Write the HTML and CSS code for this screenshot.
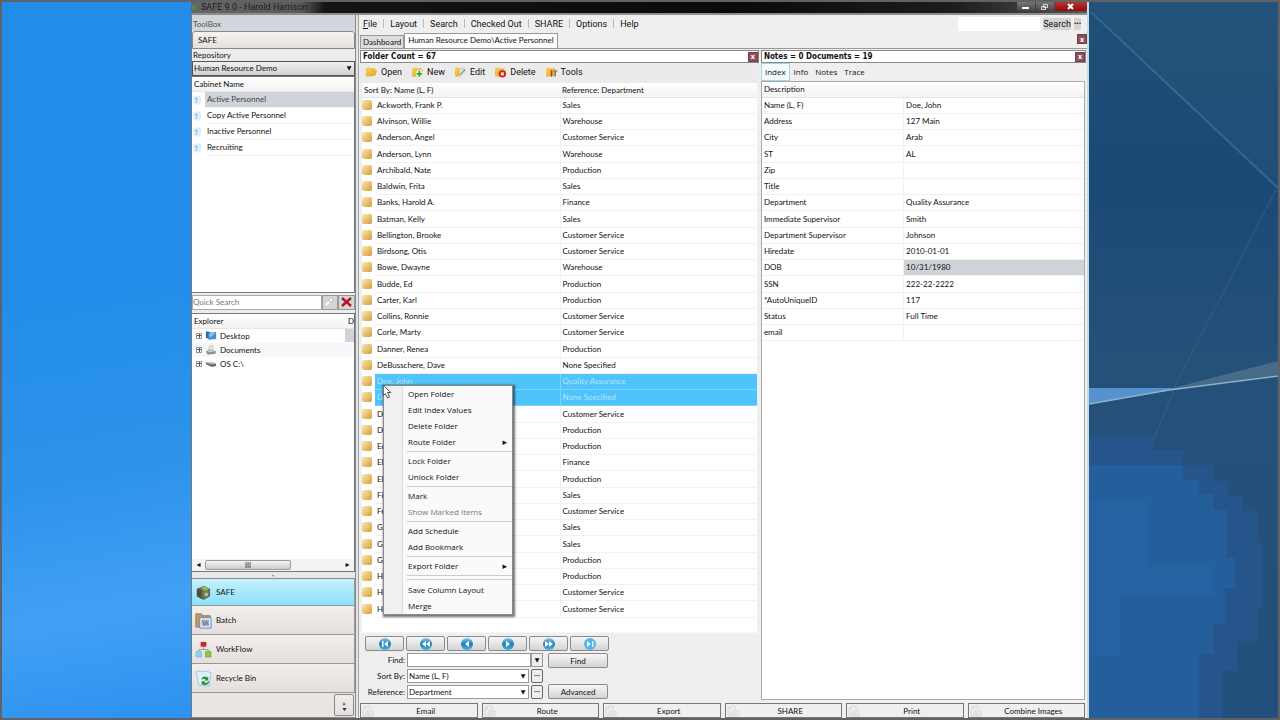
FILE: index.html
```html
<!DOCTYPE html>
<html lang="en">
<head>
<meta charset="utf-8">
<title>SAFE 9.0 - Harold Harrison</title>
<link rel="stylesheet" href="styles.css">
</head>
<body>
<svg class="defs" aria-hidden="true">
  <defs>
    <linearGradient id="orb" x1="0" y1="0" x2="0" y2="1"><stop offset="0" stop-color="#8fc4e4"/><stop offset=".5" stop-color="#1d7fb8"/><stop offset="1" stop-color="#45b4e6"/></linearGradient>
    <linearGradient id="gold" x1="0" y1="0" x2="1" y2="1"><stop offset="0" stop-color="#f7d264"/><stop offset="1" stop-color="#e0a01c"/></linearGradient>
    <symbol id="folder" viewBox="0 0 14 12"><path d="M1 2l4-1 1 1h5v2h2l-2 6-9 1-1-1z" fill="url(#gold)"/></symbol>
    <symbol id="page" viewBox="0 0 14 12"><path d="M2 11V3l3-2h4v5h3v5z" fill="#f0efed" stroke="#d3d7da"/><path d="M4 10c0-3 1-5 3-5s3 2 3 5z" fill="#dfe3e6"/><path d="M3 4l2-2v2z" fill="#e5c9a8"/></symbol>
    <symbol id="cab" viewBox="0 0 10 12"><path d="M1 2l5-1 3 2v6l-3 2-5-2z" fill="#dceefa"/><path d="M3 4h3v1H5v4H4V5H3z" fill="#8fc0de"/></symbol>
  </defs>
</svg>
<div class="desktop">
  <div class="wall-left"></div>
  <div class="window">
    <header class="titlebar">
      <span class="app-name"><i class="app-dot"></i>SAFE 9.0 - Harold Harrison</span>
      <div class="win-controls">
        <button aria-label="Minimize"><svg width="10" height="8"><path d="M1 4h7v2H1z" fill="#fff"/></svg></button>
        <button aria-label="Restore"><svg width="10" height="8"><path d="M3.500 1.500h4v3h-4zM1.500 3.500h4v3h-4z" fill="none" stroke="#ddd"/></svg></button>
        <button class="close" aria-label="Close"><svg width="10" height="8"><path d="M2 1l5 5M7 1L2 6" stroke="#fff" stroke-width="2"/></svg></button>
      </div>
    </header>
    <div class="body">
      <aside class="toolbox">
        <div class="tb-head">ToolBox</div>
        <button class="safe-head">SAFE</button>
        <label class="repo-label" for="repo">Repository</label>
        <div class="combo repo"><select id="repo"><option>Human Resource Demo</option></select></div>
        <section class="cabinets">
          <div class="col-head">Cabinet Name</div>
          <ul>
            <li class="on"><svg><use href="#cab"/></svg><span>Active Personnel</span></li>
            <li><svg><use href="#cab"/></svg><span>Copy Active Personnel</span></li>
            <li><svg><use href="#cab"/></svg><span>Inactive Personnel</span></li>
            <li><svg><use href="#cab"/></svg><span>Recruiting</span></li>
          </ul>
        </section>
        <div class="quick">
          <input type="text" placeholder="Quick Search" aria-label="Quick Search">
          <button aria-label="Search"><svg width="12" height="12"><circle cx="7" cy="4" r="2" fill="#fff" stroke="#bbb"/><path d="M5 6L2 9" stroke="#fff" stroke-width="2"/></svg></button>
          <button aria-label="Clear"><svg width="14" height="12"><path d="M2 2l9 8M11 2L2 10" stroke="#b01828" stroke-width="2.500"/></svg></button>
        </div>
        <section class="explorer">
          <div class="col-head ex-head"><span>Explorer</span><span>D</span></div>
          <ul>
            <li><i class="plus"></i><svg viewBox="0 0 14 12"><path d="M1 1l5 1v8l-5-1z" fill="#2a6da8"/><path d="M4 3l9-1v8l-9 1z" fill="#3f93d6"/><path d="M5 4l7-1-4 4-3 1z" fill="#8cc8f0"/></svg>Desktop</li>
            <li><i class="plus"></i><svg viewBox="0 0 14 12"><path d="M4 7l1-5 4-1 1 6z" fill="#dfe5c9" stroke="#aaa" stroke-width=".5"/><path d="M1 8l4-2 8 2-1 3-9 1z" fill="#8b9299"/><path d="M2 8l4-1 6 1-6 1z" fill="#d4d8db"/></svg>Documents</li>
            <li><i class="plus"></i><svg viewBox="0 0 14 12"><path d="M1 5l5-1 7 2v3l-5 1-7-3z" fill="#6b6e70"/><path d="M1 5l5-1 7 2-5 1z" fill="#c5c8ca"/></svg>OS C:\</li>
          </ul>
          <i class="vthumb"></i>
          <div class="hscroll"><button aria-label="Scroll left">◂</button><span class="thumb">III</span><button aria-label="Scroll right">▸</button></div>
        </section>
        <div class="grip"></div>
        <nav class="modules">
          <button class="on"><svg viewBox="0 0 18 18"><path d="M2 5l7-3 7 3v8l-7 4-7-4z" fill="#6b6a55"/><path d="M2 5l5 2v9l-5-3z" fill="#4e4d40"/><path d="M6 4l5-2 4 3-4 3z" fill="#98b06c"/><path d="M9 8l5-2v6l-5 3z" fill="#5e8f3c"/><circle cx="12" cy="11" r="2" fill="#b9b7a4"/></svg>SAFE</button>
          <button><svg viewBox="0 0 18 18"><path d="M1 2h6l1 2h8v12H1z" fill="#c49a62" stroke="#967043"/><path d="M5 6h12v11H5z" fill="#e6f1fa" stroke="#5e88b0"/><path d="M7 8h8v7H7z" fill="#8db8de"/><path d="M8 9l2 5 2-4 2 4" stroke="#d03c3c" fill="none"/></svg>Batch</button>
          <button><svg viewBox="0 0 18 18"><path d="M9 6v3M4 12V9h10v3" stroke="#999" fill="none"/><path d="M6 1h6v5H6z" fill="#c9252d"/><path d="M1 11h6v6H1z" fill="#8fd0f0" stroke="#6aaace" stroke-width=".5"/><path d="M11 11h6v6h-6z" fill="#8fc63f" stroke="#668f2c" stroke-width=".5"/></svg>WorkFlow</button>
          <button><svg viewBox="0 0 18 18"><path d="M1 2l4-1 2 1 5-1 5 2-2 14-11-1z" fill="#dcf0fa" stroke="#9cc6dc"/><path d="M7 10c0-3 4-4 6-2l1-1v4h-4l1-1c-1-1-2-1-3 0zM15 12c0 4-5 5-7 3l-1 1v-4h4l-1 1c1 1 3 1 4-1z" fill="#2f8f35"/></svg>Recycle Bin</button>
          <div class="more"><button aria-label="More modules"><span>»</span><svg viewBox="0 0 6 4"><path d="M0 0h6L3 4z" fill="#333"/></svg></button></div>
        </nav>
      </aside>
      <div class="vsplit"></div>
      <main class="main">
        <nav class="menubar">
          <button><u>F</u>ile</button><i></i><button>Layout</button><i></i><button>Search</button><i></i><button>Checked Out</button><i></i><button>SHARE</button><i></i><button>Options</button><i></i><button>Help</button>
          <div class="top-search"><input type="text" aria-label="Search text"><button>Search</button><button aria-label="More">•••</button></div>
        </nav>
        <div class="tabs">
          <button>Dashboard</button><button class="on">Human Resource Demo\Active Personnel</button>
          <button class="x" aria-label="Close tab">x</button>
        </div>
        <div class="panes">
          <section class="folders">
            <div class="pane-title"><b>Folder Count = 67</b><button class="x" aria-label="Close folders">x</button></div>
            <div class="toolbar">
              <button><svg viewBox="0 0 14 12"><use href="#folder"/></svg>Open</button>
              <button><svg viewBox="0 0 14 12"><use href="#folder"/><circle cx="9" cy="8" r="4" fill="#eef8e8"/><path d="M9 5v6M6 8h6" stroke="#3da33a" stroke-width="2"/></svg>New</button>
              <button><svg viewBox="0 0 14 12"><use href="#folder"/><path d="M6 3h5l2 2v5l-6 1z" fill="#dfe9ee"/><path d="M7 9l5-6" stroke="#8a9db0" stroke-width="1.500"/></svg>Edit</button>
              <button><svg viewBox="0 0 14 12"><use href="#folder"/><circle cx="9" cy="8" r="4" fill="#c62626"/><path d="M7.500 6.500l3 3m0-3l-3 3" stroke="#fff" stroke-width="1.200"/></svg>Delete</button>
              <button><svg viewBox="0 0 14 12"><use href="#folder"/><path d="M7 4v7" stroke="#a33a2a" stroke-width="1.500"/><path d="M11 5v6M9 4l2 2 2-2" stroke="#7d8288" stroke-width="1.500" fill="none"/></svg>Tools</button>
            </div>
            <div class="list-wrap">
              <table class="list">
                <colgroup><col class="c-icon"><col class="c-name"><col></colgroup>
                <thead><tr><th colspan="2">Sort By: Name (L, F)</th><th>Reference: Department</th></tr></thead>
                <tbody>
                <tr><td></td><td>Ackworth, Frank P.</td><td>Sales</td></tr>
                <tr><td></td><td>Alvinson, Willie</td><td>Warehouse</td></tr>
                <tr><td></td><td>Anderson, Angel</td><td>Customer Service</td></tr>
                <tr><td></td><td>Anderson, Lynn</td><td>Warehouse</td></tr>
                <tr><td></td><td>Archibald, Nate</td><td>Production</td></tr>
                <tr><td></td><td>Baldwin, Frita</td><td>Sales</td></tr>
                <tr><td></td><td>Banks, Harold A.</td><td>Finance</td></tr>
                <tr><td></td><td>Batman, Kelly</td><td>Sales</td></tr>
                <tr><td></td><td>Bellington, Brooke</td><td>Customer Service</td></tr>
                <tr><td></td><td>Birdsong, Otis</td><td>Customer Service</td></tr>
                <tr><td></td><td>Bowe, Dwayne</td><td>Warehouse</td></tr>
                <tr><td></td><td>Budde, Ed</td><td>Production</td></tr>
                <tr><td></td><td>Carter, Karl</td><td>Production</td></tr>
                <tr><td></td><td>Collins, Ronnie</td><td>Customer Service</td></tr>
                <tr><td></td><td>Corle, Marty</td><td>Customer Service</td></tr>
                <tr><td></td><td>Danner, Renea</td><td>Production</td></tr>
                <tr><td></td><td>DeBusschere, Dave</td><td>None Specified</td></tr>
                <tr class="sel"><td></td><td>Doe, John</td><td>Quality Assurance</td></tr>
                <tr class="sel"><td></td><td>D</td><td>None Specified</td></tr>
                <tr><td></td><td>De</td><td>Customer Service</td></tr>
                <tr><td></td><td>Du</td><td>Production</td></tr>
                <tr><td></td><td>Ed</td><td>Production</td></tr>
                <tr><td></td><td>El</td><td>Finance</td></tr>
                <tr><td></td><td>El</td><td>Production</td></tr>
                <tr><td></td><td>Fi</td><td>Sales</td></tr>
                <tr><td></td><td>Fr</td><td>Customer Service</td></tr>
                <tr><td></td><td>Gi</td><td>Sales</td></tr>
                <tr><td></td><td>Gl</td><td>Sales</td></tr>
                <tr><td></td><td>Go</td><td>Production</td></tr>
                <tr><td></td><td>Ha</td><td>Production</td></tr>
                <tr><td></td><td>Ha</td><td>Customer Service</td></tr>
                <tr><td></td><td>He</td><td>Customer Service</td></tr>
                </tbody>
              </table>
              <div class="ctx" role="menu">
                <button>Open Folder</button><button>Edit Index Values</button><button>Delete Folder</button><button class="sub">Route Folder</button>
                <hr>
                <button>Lock Folder</button><button>Unlock Folder</button>
                <hr>
                <button>Mark</button><button disabled>Show Marked Items</button>
                <hr>
                <button>Add Schedule</button><button>Add Bookmark</button>
                <hr>
                <button class="sub">Export Folder</button>
                <hr><hr class="second">
                <button>Save Column Layout</button><button>Merge</button>
              </div>
              <svg class="cursor" viewBox="0 0 10 15"><path d="M1 1v10l2-2 2 4 2-1-2-4h3z" fill="#fff" stroke="#333" stroke-width=".8"/></svg>
            </div>
            <div class="finder">
              <div class="pager">
                <button aria-label="First"><svg viewBox="0 0 12 12"><circle cx="6" cy="6" r="6" fill="url(#orb)"/><path d="M3 3h1.500v6H3zM9 3v6L5 6z" fill="#fff"/></svg></button>
                <button aria-label="Fast back"><svg viewBox="0 0 12 12"><circle cx="6" cy="6" r="6" fill="url(#orb)"/><path d="M6 3v6L2 6zM10 3v6L6 6z" fill="#fff"/></svg></button>
                <button aria-label="Previous"><svg viewBox="0 0 12 12"><circle cx="6" cy="6" r="6" fill="url(#orb)"/><path d="M8 3v6L4 6z" fill="#fff"/></svg></button>
                <button aria-label="Next"><svg viewBox="0 0 12 12"><circle cx="6" cy="6" r="6" fill="url(#orb)"/><path d="M4 3v6l4-3z" fill="#fff"/></svg></button>
                <button aria-label="Fast forward"><svg viewBox="0 0 12 12"><circle cx="6" cy="6" r="6" fill="url(#orb)"/><path d="M2 3v6l4-3zM6 3v6l4-3z" fill="#fff"/></svg></button>
                <button aria-label="Last"><svg viewBox="0 0 12 12"><circle cx="6" cy="6" r="6" fill="#55b5e8"/><path d="M3 3v6l4-3zM8 3h1.500v6H8z" fill="#e6f6ff"/></svg></button>
              </div>
              <div class="find-grid">
                <div class="fields">
                  <label for="find">Find:</label><div class="wide"><input id="find" type="text"><button class="dd" aria-label="History">▼</button></div>
                  <label for="sort">Sort By:</label><div class="combo"><select id="sort"><option>Name (L, F)</option></select></div><button class="dots" aria-label="Sort options">•••</button>
                  <label for="ref">Reference:</label><div class="combo"><select id="ref"><option>Department</option></select></div><button class="dots" aria-label="Reference options">•••</button>
                </div>
                <div class="find-btns"><button>Find</button><button>Advanced</button></div>
              </div>
            </div>
          </section>
          <section class="details">
            <div class="pane-title"><b>Notes = 0 Documents = 19</b><button class="x" aria-label="Close details">x</button></div>
            <div class="dtabs"><button class="on">Index</button><button>Info</button><button>Notes</button><button>Trace</button></div>
            <div class="dbody">
              <table class="index">
                <colgroup><col class="c-key"><col></colgroup>
                <thead><tr><th colspan="2">Description</th></tr></thead>
                <tbody>
                <tr><td>Name (L, F)</td><td>Doe, John</td></tr>
                <tr><td>Address</td><td>127 Main</td></tr>
                <tr><td>City</td><td>Arab</td></tr>
                <tr><td>ST</td><td>AL</td></tr>
                <tr><td>Zip</td><td></td></tr>
                <tr><td>Title</td><td></td></tr>
                <tr><td>Department</td><td>Quality Assurance</td></tr>
                <tr><td>Immediate Supervisor</td><td>Smith</td></tr>
                <tr><td>Department Supervisor</td><td>Johnson</td></tr>
                <tr><td>Hiredate</td><td>2010-01-01</td></tr>
                <tr><td>DOB</td><td class="hl">10/31/1980</td></tr>
                <tr><td>SSN</td><td>222-22-2222</td></tr>
                <tr><td>*AutoUniqueID</td><td>117</td></tr>
                <tr><td>Status</td><td>Full Time</td></tr>
                <tr><td>email</td><td></td></tr>
                </tbody>
              </table>
            </div>
          </section>
        </div>
        <div class="actions">
          <button><svg><use href="#page"/></svg><span>Email</span></button>
          <button><svg><use href="#page"/></svg><span>Route</span></button>
          <button><svg><use href="#page"/></svg><span>Export</span></button>
          <button><svg><use href="#page"/></svg><span>SHARE</span></button>
          <button><svg><use href="#page"/></svg><span>Print</span></button>
          <button><svg><use href="#page"/></svg><span>Combine Images</span></button>
        </div>
      </main>
    </div>
  </div>
  <div class="wall-right">
    <svg viewBox="0 0 189 716" preserveAspectRatio="none" aria-hidden="true">
      <defs>
        <linearGradient id="sky" x1="0" y1="0" x2="0" y2="1"><stop offset="0" stop-color="#204f78"/><stop offset=".25" stop-color="#1b4976"/><stop offset=".5" stop-color="#25507a"/><stop offset="1" stop-color="#234f7c"/></linearGradient>
      </defs>
      <path d="M0 0h189v716H0z" fill="url(#sky)"/>
      <path d="M0 6l189 180V0H0z" fill="#2a587e" opacity=".35"/>
      <path d="M2 10L189 186" stroke="#34698b" stroke-width="2"/>
      <path d="M187 188L88 380 48 480" stroke="#43698d" stroke-width="1" fill="none" opacity=".6"/>
      <path d="M0 433h64v15h30v15h30v16h15v15h15v15h14v32h6v66h-6v32h-20v30h-14v57H0z" fill="#25558a"/>
      <path d="M0 463h94v15h16v14h14v16h14v48h8v30h-10v36h-12v30h-14v64H0z" fill="#245e9b"/>
      <path d="M0 500h60v64h64v30H30v60H0z" fill="#2562a2"/>
      <path d="M0 386h88L0 402z" fill="#5593d0"/>
      <path d="M76 388l113-29v14z" fill="#56788f" opacity=".7"/>
      <path d="M0 402L80 388 189 374" stroke="#8fb4cc" stroke-width="1.500" fill="none"/>
    </svg>
  </div>
</div>
</body>
</html>
```
FILE: styles.css
```css
* { box-sizing: border-box; }
body {
  margin: 0;
  font: 8px/12px Lato, Roboto, sans-serif;
  color: #111;
}
button, input, select { font: inherit; color: inherit; margin: 0; padding: 0; }
button { border: 0; background: none; white-space: nowrap; }
ul { list-style: none; margin: 0; padding: 0; }
i { font-style: normal; }
.defs { position: absolute; width: 0; height: 0; }

.desktop {
  display: grid;
  grid-template-columns: 189fr 898fr 189fr;
  min-height: 100vh;
  border: 2px solid #5f6368;
}
.wall-left { background: linear-gradient(170deg, #228de8 0%, #228de9 40%, #2d93ea 65%, #42a0f4 84%, #2c92f0 100%); }
.wall-right { display: grid; position: relative; background: #234f7c; }
.wall-right svg { position: absolute; inset: 0; width: 100%; height: 100%; }

.window { display: flex; flex-direction: column; background: #efefef; border-right: 2px solid #c3dcec; }
.titlebar {
  display: flex;
  justify-content: space-between;
  height: 11px;
  overflow: hidden;
  background: linear-gradient(90deg, #666 0, #5a5a5a 110px, #141414 134px, #0a0a0a 60%, #1c1c1c 85%, #555 100%);
}
.app-name { display: flex; align-items: center; gap: 5px; padding-left: 1px; font: 9px/9px Roboto, sans-serif; color: #1c1c1c; }
.app-dot { width: 4px; height: 5px; border-radius: 2px; background: #5d8a4a; }
.win-controls { display: flex; gap: 1px; height: 9px; }
.win-controls button { width: 18px; background: linear-gradient(#777, #444); display: grid; place-items: center; border-radius: 0 0 2px 2px; }
.win-controls .close { width: 32px; background: linear-gradient(#c03030, #8a0f0f); }

.body { flex: 1; display: grid; grid-template-columns: 164px 4px 1fr; border-top: 2px solid #8d8d8d; }
.vsplit { background: #e4e4e4; border-left: 1px solid #8a8a8a; border-right: 1px solid #a5a5a5; }

.toolbox { display: flex; flex-direction: column; border-left: 1px solid #777; background: #ececec; }
.tb-head { height: 16px; padding: 3px 1px 0; background: #d0d6dc; color: #555; }
.safe-head {
  height: 18px;
  padding-left: 5px;
  text-align: left;
  border: 1px solid #8b8984;
  border-radius: 3px 3px 0 0;
  background: linear-gradient(#f6f4f2, #e3dfdc);
}
.repo-label { height: 12px; padding-left: 1px; }
.combo { position: relative; display: grid; background: #fff; border: 1px solid #999; }
.combo select { appearance: none; border: 0; background: none; width: 100%; padding-left: 1px; line-height: 11px; }
.combo::after { content: "▼"; position: absolute; right: 0; top: 0; width: 10px; text-align: center; font: 6px/12px "DejaVu Sans", sans-serif; color: #111; pointer-events: none; }
.repo { height: 15px; border-color: #555; background: linear-gradient(#f1f1f1, #d2d2d2); }
.cabinets { flex: 218 1 0; background: #fff; border: 1px solid #777; border-left: 0; }
.col-head { height: 15px; padding: 1px 2px 0; background: linear-gradient(#fff, #f2f2f2); border-bottom: 1px solid #e6e6e6; }
.cabinets li { display: grid; grid-template-columns: 12px 1fr; gap: 1px; height: 16px; align-items: center; }
.cabinets li svg { width: 10px; height: 12px; }
.cabinets li span { line-height: 15px; padding-left: 2px; border-bottom: 1px solid #f4f4f4; }
.cabinets .on span { background: #ced3d9; color: #444; }
.quick { display: grid; grid-template-columns: 1fr 16px 17px; height: 18px; padding: 2px 0 1px; }
.quick input { border: 1px solid #aaa; padding-left: 0; min-width: 0; }
.quick input::placeholder { color: #777; }
.quick button { display: grid; place-items: center; border: 1px solid #999; background: #d5d5d5; }
.explorer { position: relative; flex: 261 1 0; display: flex; flex-direction: column; margin-top: 2px; background: #fff; border: 1px solid #777; border-left: 0; }
.ex-head { display: flex; justify-content: space-between; padding-right: 0; }
.explorer li { display: flex; align-items: center; gap: 3px; height: 14px; padding-left: 4px; }
.explorer li:nth-child(2) { background: #f7f8fa; }
.explorer li svg { width: 12px; height: 11px; }
.plus { width: 6px; height: 6px; border: 1px solid #999; background: linear-gradient(#555, #555) center/4px 1px no-repeat, linear-gradient(#555, #555) center/1px 4px no-repeat; }
.vthumb { position: absolute; right: 0; top: 15px; width: 9px; height: 13px; background: #d0d4da; }
.hscroll { display: flex; align-items: center; height: 12px; margin-top: auto; background: #f3f3f3; }
.hscroll button { width: 13px; font: 8px/10px "DejaVu Sans", sans-serif; }
.thumb { flex: 0 0 86px; margin-right: auto; height: 10px; border: 1px solid #999; border-radius: 2px; text-align: center; font-size: 7px; line-height: 8px; background: linear-gradient(#f4f4f4, #ccc); }
.grip { height: 6px; background: radial-gradient(circle, #999 1px, transparent 1px) center/3px 3px no-repeat, #e8e8e8; }
.modules button { display: flex; align-items: center; gap: 4px; width: 100%; height: 29px; padding-left: 3px; background: linear-gradient(#f2eeec, #e4dfdc); border-bottom: 1px solid #9a9692; border-right: 1px solid #9a9692; }
.modules .on { height: 28px; background: linear-gradient(#c5f0fd, #8be0fb); border-top: 1px solid #888; }
.modules svg { width: 17px; height: 17px; }
.modules .more { display: flex; justify-content: flex-end; padding: 1px 1px; height: 25px; background: #e9e5e2; border-bottom: 1px solid #888; }
.modules .more button { flex-direction: column; justify-content: center; gap: 1px; width: 20px; height: 22px; padding: 0; border: 1px solid #888; border-radius: 2px; line-height: 7px; }
.modules .more svg { width: 5px; height: 3px; }

.main { display: flex; flex-direction: column; min-width: 0; padding: 0 0 0 1px; }
.menubar { display: flex; align-items: center; gap: 6px; height: 17px; margin-left: 3px; font: 9px/12px Roboto, sans-serif; }
.menubar i { width: 1px; height: 9px; background: #bbb; }
.top-search { margin-left: auto; display: flex; gap: 3px; margin-right: 6px; line-height: 12px; }
.top-search input { border: 0; width: 82px; height: 14px; }
.top-search button { background: #d4d4d4; align-self: center; }
.top-search button:last-child { font-size: 7px; }
.tabs { display: flex; align-items: flex-end; height: 17px; border-bottom: 1px solid #999; }
.tabs button { height: 13px; padding: 0 2px; background: #dedede; border: 1px solid #999; border-bottom: 0; }
.tabs .on { height: 15px; padding: 0 3px 2px; background: #fdfdfd; }
button.x, .tabs .x { width: 10px; height: 10px; padding: 0; font: 700 8px/7px Roboto, sans-serif; border: 1px solid #6e4248; background: #8e5058; color: #fff; }
.tabs .x { margin: 0 0 4px auto; }
.panes { flex: 1; display: grid; grid-template-columns: 400fr 326fr; gap: 2px; padding: 1px 1px 0 0; }
.pane-title { display: flex; align-items: center; justify-content: space-between; height: 13px; padding-left: 2px; background: #fff; border: 1px solid #888; }
.pane-title b { font: 700 8px/12px "DejaVu Sans Condensed", Roboto, sans-serif; }
.folders, .details { display: flex; flex-direction: column; min-width: 0; }
.toolbar { display: flex; align-items: center; gap: 9px; height: 20px; padding: 0 0 3px 5px; background: #ebebec; font: 9px/12px Roboto, sans-serif; }
.toolbar button { display: flex; align-items: center; gap: 3px; }
.toolbar svg { width: 13px; height: 12px; }
.list-wrap { position: relative; flex: 1; margin: 0 2px; background: #fff; }
table { width: 100%; border-collapse: collapse; table-layout: fixed; }
th { height: 14px; padding: 0 2px; text-align: left; font-weight: 400; background: linear-gradient(#fff, #f3f3f3); border-bottom: 1px solid #e6e6e6; }
td { height: 16px; padding: 0 2px; line-height: 12px; white-space: nowrap; border-bottom: 1px solid #f1f1f1; }
tbody tr:nth-child(4n) td { height: 17px; }
.c-icon { width: 13px; }
.c-name { width: 185px; }
.c-key { width: 44%; }
.list td:first-child { padding: 0; border: 0; }
.list td:first-child::before { content: ""; display: block; width: 10px; height: 10px; border-radius: 2px; background: linear-gradient(135deg, #fbe8b4, #e3b45b 70%, #c99a48); }
.list td:last-child { border-left: 1px solid #f1f1f1; }
.list .sel td:not(:first-child) { background: #4fc3fb; color: #b4e6ff; border-color: #82d3fa; }
.ctx { position: absolute; left: 21px; top: 302px; width: 130px; padding-left: 1px; font: 8px/12px "Open Sans", Roboto, sans-serif; background: linear-gradient(90deg, #f0f0f0 18px, #dcdcdc 18px, #dcdcdc 19px, #fafafa 19px); border: 1px solid #8a8a8a; box-shadow: 1px 1px 2px 1px rgba(0, 0, 0, .55); }
.ctx button { display: block; position: relative; width: 100%; height: 16px; padding-left: 23px; text-align: left; }
.ctx button:disabled { color: #777; }
.ctx .sub::after { content: "▸"; position: absolute; right: 5px; font: 9px/12px "DejaVu Sans", sans-serif; }
.ctx hr { height: 1px; margin: 1px 0 1px 22px; border: 0; background: #ccc; }
.ctx .second { margin: 3px 0 2px 22px; }
.cursor { position: absolute; left: 20px; top: 301px; width: 11px; height: 16px; }

.finder { padding: 3px 5px 4px; border-top: 1px solid #f6f6f6; }
.pager { display: grid; grid-template-columns: repeat(6, 39px); gap: 2px; }
.pager button, .find-btns button { height: 15px; border: 1px solid #8a8a8a; border-radius: 2px; background: linear-gradient(#f6f6f6, #d4d4d4); }
.pager button { display: grid; place-items: center; }
.pager svg { width: 12px; height: 12px; }
.find-grid { display: grid; grid-template-columns: 178px 60px; gap: 5px; margin-top: 2px; }
.fields { display: grid; grid-template-columns: 40px 1fr 12px; gap: 2px; align-items: center; }
.fields label { text-align: right; }
.fields .combo, .dots { height: 14px; }
.wide { grid-column: 2 / 4; display: grid; grid-template-columns: 1fr 12px; height: 14px; }
.wide input { min-width: 0; border: 1px solid #999; background: #fff; }
.dd { border: 1px solid #999; background: #eee; font: 6px/10px "DejaVu Sans", sans-serif; }
.dots { border: 1px solid #666; border-radius: 2px; background: #eee; font: 6px/10px Roboto, sans-serif; }
.find-btns { display: flex; flex-direction: column; justify-content: space-between; }

.dtabs { display: flex; height: 18px; gap: 1px; font: 8px/12px "Open Sans", Roboto, sans-serif; }
.dtabs button { padding: 0 3px; }
.dtabs .on { background: #f4fbfe; border: 1px solid #9fd6ea; }
.dbody { flex: 1; margin: 0 1px 3px 0; background: #fff; border: 1px solid #aaa; }
.index th { height: 15px; }
.index td:last-child { border-left: 1px solid #f1f1f1; }
.index td.hl { background: #ced3d9; }
.actions { display: grid; grid-template-columns: repeat(6, 1fr); gap: 4px; padding-right: 2px; }
.actions button { display: grid; grid-template-columns: 14px 1fr; align-items: center; height: 15px; border: 1px solid #777; background: #efefef; }
.actions svg { width: 14px; height: 12px; }
```
